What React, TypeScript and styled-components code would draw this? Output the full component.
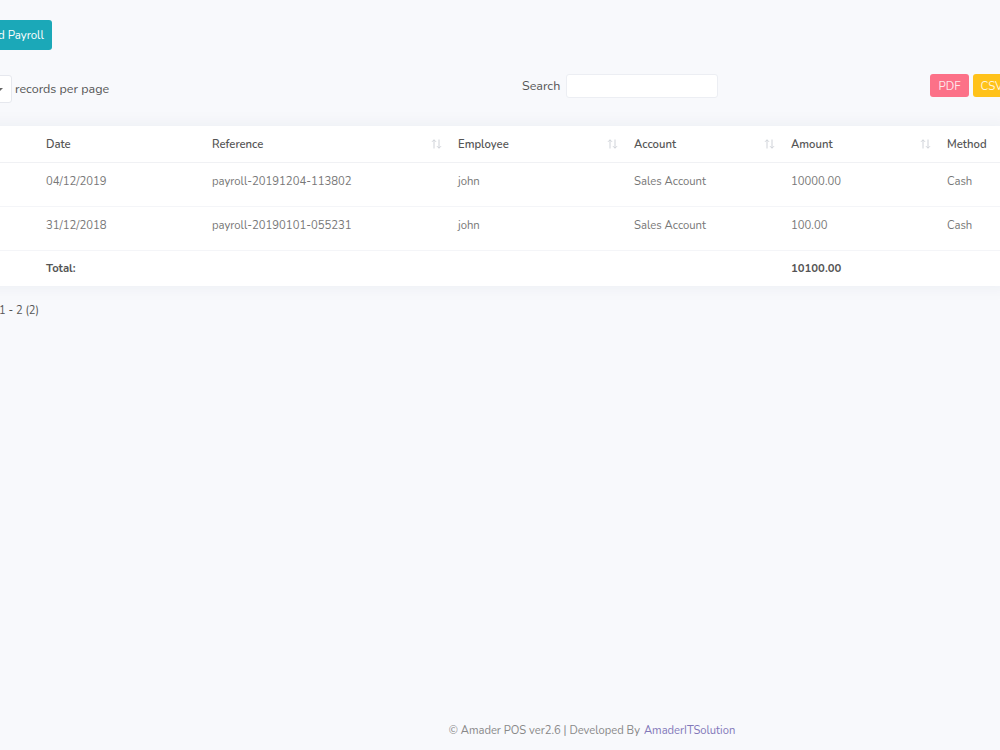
import React from 'react';
import styled, { createGlobalStyle } from 'styled-components';

const rows = [
  { date: '04/12/2019', reference: 'payroll-20191204-113802', employee: 'john', account: 'Sales Account', amount: '10000.00', method: 'Cash' },
  { date: '31/12/2018', reference: 'payroll-20190101-055231', employee: 'john', account: 'Sales Account', amount: '100.00', method: 'Cash' },
];

const columns = [
  { key: 'lead', title: '', width: 69, sortable: false },
  { key: 'date', title: 'Date', width: 166, sortable: false },
  { key: 'reference', title: 'Reference', width: 246, sortable: true },
  { key: 'employee', title: 'Employee', width: 176, sortable: true },
  { key: 'account', title: 'Account', width: 157, sortable: true },
  { key: 'amount', title: 'Amount', width: 156, sortable: true },
  { key: 'method', title: 'Method', width: 76, sortable: false },
];

const GlobalStyle = createGlobalStyle`
  html, body {
    margin: 0;
    background: #f8f9fc;
    font-family: 'Nunito', 'Lato', 'Open Sans', sans-serif;
    overflow: hidden;
  }
`;

const Page = styled.div`
  min-height: 100vh;
  display: flex;
  flex-direction: column;
`;

const Main = styled.div`
  margin-left: -35px;
  width: 1046px;
  padding-top: 20px;
`;

const AddButton = styled.button`
  height: 30px;
  margin-left: 6px;
  padding: 0 8px 0 12px;
  border: none;
  border-radius: 3px;
  background: #1ba8b8;
  color: #fff;
  font-family: inherit;
  font-size: 11.5px;
  font-weight: 400;
`;

const Toolbar = styled.div`
  display: grid;
  grid-template-columns: 557px auto 1fr;
  align-items: start;
  margin-top: 24px;
`;

const Group = styled.div<{ $end?: boolean }>`
  display: flex;
  align-items: center;
  justify-content: ${(p) => (p.$end ? 'flex-end' : 'flex-start')};
`;

const PerPage = styled.div`
  width: 47px;
  height: 28px;
  margin-top: 1px;
  box-sizing: border-box;
  border: 1px solid #e6e8ee;
  border-radius: 3px;
  background: #fff;
  display: flex;
  align-items: center;
  justify-content: flex-end;
  padding-right: 8px;
`;

const Caret = styled.span`
  width: 0;
  height: 0;
  border-left: 3px solid transparent;
  border-right: 3px solid transparent;
  border-top: 3px solid #666;
`;

const Label = styled.span`
  font-size: 12.5px;
  color: #555;
  margin-left: 3px;
  line-height: 28px;
`;

const SearchLabel = styled.span`
  font-size: 12.5px;
  color: #555;
  margin-right: 6px;
  line-height: 24px;
`;

const SearchInput = styled.input`
  width: 152px;
  height: 24px;
  box-sizing: border-box;
  border: 1px solid #eceef3;
  border-radius: 3px;
  background: #fff;
  outline: none;
`;

const ExportButton = styled.button<{ $bg: string }>`
  height: 23px;
  padding: 0 8px;
  margin-left: 4px;
  border: none;
  border-radius: 3px;
  background: ${(p) => p.$bg};
  color: rgba(255, 255, 255, 0.85);
  font-family: inherit;
  font-size: 11.5px;
`;

const Card = styled.div`
  margin-top: 23px;
  background: #fff;
  box-shadow: 0 0 18px rgba(40, 50, 90, 0.06);
`;

const Table = styled.table`
  width: 100%;
  table-layout: fixed;
  border-collapse: collapse;
  font-size: 11.3px;
`;

const Th = styled.th`
  position: relative;
  height: 36px;
  box-sizing: border-box;
  padding: 1px 12px 0;
  text-align: left;
  font-weight: 600;
  color: #555;
  border-bottom: 1px solid #f0f1f4;
`;

const SortIcon = styled.svg`
  position: absolute;
  right: 4px;
  top: 13px;
`;

const Td = styled.td<{ $bold?: boolean }>`
  height: 44px;
  box-sizing: border-box;
  padding: 0 12px 6px;
  color: ${(p) => (p.$bold ? '#555' : '#777')};
  font-weight: ${(p) => (p.$bold ? 700 : 400)};
  border-bottom: 1px solid #f4f5f8;
  white-space: nowrap;
`;

const TotalRow = styled.tr`
  td {
    height: 36px;
    padding-bottom: 0;
    border-top: 1px solid #e6e7eb;
    border-bottom: none;
  }
`;

const Pager = styled.div`
  margin: 17px 0 0 34px;
  font-size: 11px;
  color: #555;
`;

const Footer = styled.footer`
  margin-top: auto;
  padding-left: 184px;
  height: 40px;
  display: flex;
  align-items: center;
  justify-content: center;
  font-size: 11.2px;
  color: #888;
`;

const FooterLink = styled.span`
  color: #8278b9;
  margin-left: 4px;
`;

const Arrows = () => (
  <SortIcon width="11" height="10" viewBox="0 0 11 10" fill="none" stroke="#cfd2d8" strokeWidth="1">
    <path d="M3 9.5V0.8M1 2.8L3 0.8L5 2.8" />
    <path d="M8 0.5V9.2M6 7.2L8 9.2L10 7.2" />
  </SortIcon>
);

export default function App() {
  return (
    <>
      <GlobalStyle />
      <Page>
        <Main>
          <AddButton>Add Payroll</AddButton>
          <Toolbar>
            <Group>
              <PerPage>
                <Caret />
              </PerPage>
              <Label>records per page</Label>
            </Group>
            <Group>
              <SearchLabel>Search</SearchLabel>
              <SearchInput />
            </Group>
            <Group $end>
              <ExportButton $bg="#fc7188">PDF</ExportButton>
              <ExportButton $bg="#ffc21a">CSV</ExportButton>
            </Group>
          </Toolbar>
          <Card>
            <Table>
              <colgroup>
                {columns.map((c) => (
                  <col key={c.key} style={{ width: c.width }} />
                ))}
              </colgroup>
              <thead>
                <tr>
                  {columns.map((c) => (
                    <Th key={c.key}>
                      {c.title}
                      {c.sortable && <Arrows />}
                    </Th>
                  ))}
                </tr>
              </thead>
              <tbody>
                {rows.map((r) => (
                  <tr key={r.reference}>
                    <Td />
                    <Td>{r.date}</Td>
                    <Td>{r.reference}</Td>
                    <Td>{r.employee}</Td>
                    <Td>{r.account}</Td>
                    <Td>{r.amount}</Td>
                    <Td>{r.method}</Td>
                  </tr>
                ))}
                <TotalRow>
                  <Td />
                  <Td $bold>Total:</Td>
                  <Td />
                  <Td />
                  <Td />
                  <Td $bold>10100.00</Td>
                  <Td />
                </TotalRow>
              </tbody>
            </Table>
          </Card>
          <Pager>1 - 2 (2)</Pager>
        </Main>
        <Footer>
          © Amader POS ver2.6 | Developed By<FooterLink>AmaderITSolution</FooterLink>
        </Footer>
      </Page>
    </>
  );
}
